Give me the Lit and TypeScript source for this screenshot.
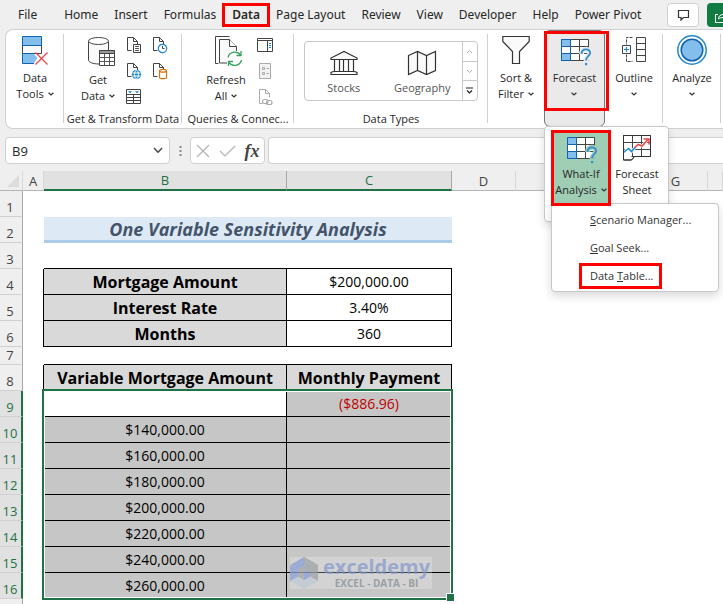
import { LitElement, html, svg, css, nothing } from "lit";
import { customElement } from "lit/decorators.js";
import { classMap } from "lit/directives/class-map.js";

const icon = (w: number, h: number, body: unknown) =>
  html`<svg width=${w} height=${h} viewBox="0 0 ${w} ${h}" fill="none" stroke-linejoin="miter" aria-hidden="true">${body}</svg>`;

const chevron = html`<svg class="chev" width="6" height="4" viewBox="0 0 6 4" fill="none" aria-hidden="true"><path d="M.6 .7L3 3L5.4 .7" stroke="#333" stroke-width="1.2"/></svg>`;

const dataTools = icon(28, 32, svg`
  <path d="M1.500 2.500h19v9h-19z" fill="#83beec" stroke="#0f64b0"/>
  <path d="M1.500 11.500h19v8h-19z" fill="#fafafa" stroke="#444"/>
  <path d="M1.500 19.500h11l4 4.500l-4 5.500h-11z" fill="#83beec"/>
  <path d="M13 29.500H1.500v-10H13M1 11.500h20" stroke="#0f64b0"/>
  <path d="M14.500 18.500l12 12M26.500 18.500l-12 12" stroke="#e8454c" stroke-width="1.300"/>`);

const getData = icon(34, 32, svg`<g transform="translate(6 2)">
  <path d="M1.500 6v18c0 2.200 4.500 4 10.500 4s9.500-1.800 9.500-4V6" fill="#fafafa" stroke="#444"/>
  <ellipse cx="11.500" cy="5" rx="10" ry="3.500" fill="#fff" stroke="#444"/>
  <path d="M12.500 14.500h15v15h-15z" fill="#fff" stroke="#444"/>
  <path d="M12.500 14.500h15v3h-15z" fill="#999" stroke="#444"/>
  <path d="M12.500 21.500h15M12.500 25.500h15M17.500 18v11.500M22.500 18v11.500" stroke="#555"/></g>`);

const refreshAll = icon(34, 32, svg`<g transform="translate(5 0)">
  <path d="M4.500 29.500h-3v-27h14" stroke="#444"/>
  <path d="M5.500 5.500h10l7 7v16.500h-17z" fill="#fafafa" stroke="#444"/>
  <path d="M15.500 5.500v7h7" fill="#fff" stroke="#444"/>
  <path d="M13 17h15v15h-15z" fill="#fff"/>
  <path d="M14 23.500a7 7 0 0 1 12.500-2.500M27.500 26a7 7 0 0 1-12.500 2.500" stroke="#33a05b" stroke-width="1.300"/>
  <path d="M27 17v4.500h-4.500M14.500 32v-4.500h4.500" stroke="#33a05b" stroke-width="1.300"/></g>`);

const page = svg`<path d="M5.500 14.500h-4v-13h6l4 4v3M7.500 1.500v4h4" stroke="#444"/>`;

const fromText = icon(16, 18, svg`${page}<path d="M7.500 8.500h7v8h-7z" fill="#fff" stroke="#444"/><path d="M9 10.500h4M9 12.500h4M9 14.500h4" stroke="#555"/>`);
const recent = icon(16, 18, svg`${page}<circle cx="10.500" cy="12.500" r="4.200" fill="#fff" stroke="#1e88cf" stroke-width="1.200"/><path d="M10.500 10v2.500h2" stroke="#444"/>`);
const fromWeb = icon(16, 18, svg`${page}<circle cx="10.500" cy="12.500" r="4.700" fill="#1e88cf"/><path d="M6.500 11h8M6.500 14h8" stroke="#fff"/><ellipse cx="10.500" cy="12.500" rx="2" ry="4.200" stroke="#fff" stroke-width=".9"/>`);
const connections = icon(16, 18, svg`${page}<path d="M7.500 9v6.500c0 1 1.600 1.200 3.500 1.200s3.500-.3 3.500-1.200V9" fill="#fff" stroke="#d9730d" stroke-width="1.200"/><ellipse cx="11" cy="8.700" rx="3.500" ry="1.400" fill="#fff" stroke="#d9730d" stroke-width="1.200"/>`);
const fromTable = icon(16, 18, svg`
  <path d="M.5 1.500h14v14h-14z" fill="#fff" stroke="#444"/>
  <path d="M.5 6.500h14M.5 9.500h14M.5 12.500h14M7.500 6v9.500" stroke="#444"/>
  <path d="M2.500 3.500l1.500 1.500l1.500-1.500zM9.500 3.500l1.500 1.500l1.500-1.500z" fill="#1e88cf" stroke="#1e88cf" stroke-width=".6"/>`);

const pane = icon(16, 18, svg`<path d="M.5 2.500h15v13h-15z" fill="#fff" stroke="#444"/><path d="M.5 4.500h15M10.500 4.500v11" stroke="#444"/><path d="M12 7.500h2M12 9.500h2M12 11.500h2" stroke="#1e88cf"/>`);
const props = icon(16, 18, svg`<path d="M2.500 1.500h11v15h-11z" fill="#f2f2f2" stroke="#aaa"/><path d="M5.500 5.500h2v2h-2zM5.500 10.500h2v2h-2zM9.500 6.500h2.500M9.500 11.500h2.500" stroke="#aaa"/>`);
const links = icon(16, 18, svg`<path d="M5.500 15.500h-3v-14h6l4 4v4M8.500 1.500v4h4" stroke="#aaa"/><rect x="5.500" y="11.500" width="5.500" height="4" rx="2" stroke="#aaa" stroke-width="1.200"/><rect x="9.500" y="12.500" width="5.500" height="4" rx="2" stroke="#aaa" stroke-width="1.200"/>`);

const stocks = icon(28, 26, svg`
  <path d="M1 9.500V8L14 1.500L27 8v1.500z" fill="#fafafa" stroke="#333" stroke-width="1.200"/>
  <path d="M1 24.500h26v-2l-2.500-1h-21l-2.500 1z" fill="#fff" stroke="#333" stroke-width="1.200"/>
  <path d="M4.500 10v11M9.500 10v11M13.500 10v11M18.500 10v11M23.500 10v11" stroke="#333" stroke-width="1.200"/>`);
const geography = icon(30, 26, svg`<path d="M1.500 5.500l9-4l9 4l9-4v19l-9 4l-9-4l-9 4zM10.500 1.500v19M19.500 5.500v19" fill="#fafafa" stroke="#333" stroke-width="1.200"/>`);

const sortFilter = icon(28, 32, svg`<path d="M.8 2.500h26.400v5L17.500 17.500v12h-7v-12L.8 7.500z" fill="#fafafa" stroke="#333" stroke-width="1.200"/>`);

const whatIf = icon(32, 32, svg`
  <path d="M2.500 5.500h27v21h-27z" fill="#fff" stroke="#444"/>
  <path d="M11.500 12.500h18M11.500 19.500h18M20.500 5.500v21" stroke="#444"/>
  <path d="M2.500 5.500h9v7h-9zM2.500 19.500h9v7h-9z" fill="#83beec" stroke="#0f64b0"/>
  <path d="M2.500 12.500h9v7h-9z" fill="#fff" stroke="#0f64b0"/>
  <path class="halo" d="M22.500 20c0-3 2-4.700 4.500-4.700s4.500 1.800 4 4.200c-.5 2.700-4 3-4 8" stroke-width="5"/>
  <path d="M22.500 20c0-3 2-4.700 4.500-4.700s4.500 1.800 4 4.200c-.5 2.700-4 3-4 7" stroke="#2f8fd0" stroke-width="1.800"/>
  <path d="M26 29h2.200v2.200h-2.200z" fill="#2f8fd0"/>`);

const forecastSheet = icon(30, 28, svg`
  <path d="M1.500 1.500h27v21h-16l-3 3.500h-8z" fill="#fff" stroke="#333"/>
  <path d="M1.500 8.500h27M1.500 15.500h27M10.500 1.500v21M19.500 1.500v21" stroke="#444"/>
  <path d="M1.500 18.500l5-4l3 3l4-4.500" stroke="#fff" stroke-width="3"/>
  <path d="M13 13.500l3-3l4 1.500l6.500-7" stroke="#fff" stroke-width="3"/>
  <path d="M1.500 18.500l5-4l3 3l4-4.500" stroke="#1e88cf" stroke-width="1.600"/>
  <path d="M13 13.500l3-3l4 1.500l6.500-7" stroke="#e8454c" stroke-width="1.600"/>
  <path d="M21.500 5h5.500v5.500" stroke="#e8454c" stroke-width="1.500"/>
  <path d="M1.500 1.500v24.500h8l3-3.500h-3M1.500 1.500h27v21" stroke="#333"/>`);

const outline = icon(28, 32, svg`<g transform="translate(2 0)">
  <path d="M14.500 3.500h9v24h-9zM14.500 9.500h9M14.500 15.500h9M14.500 21.500h9" fill="#fafafa" stroke="#444"/>
  <path d="M10.500 3.500h-6v7M4.500 20.500v7h6" stroke="#444" stroke-dasharray="3 1"/>
  <path d="M.5 11.500h8v8h-8z" fill="#fff" stroke="#444"/>
  <path d="M2 15.500h5M4.500 13v5" stroke="#1e88cf" stroke-width="1.200"/></g>`);
const analyze = icon(32, 32, svg`<circle cx="16" cy="16" r="14.200" fill="#fff" stroke="#1e88cf" stroke-width="1.500"/><circle cx="16" cy="16" r="10.800" fill="#83beec" stroke="#0f64b0" stroke-width="1.500"/>`);

const TABS = ["File", "Home", "Insert", "Formulas", "Data", "Page Layout", "Review", "View", "Developer", "Help", "Power Pivot"];
const COLS = ["A", "B", "C", "D", "E", "F", "G", "H"];
const VARIABLE = ["$140,000.00", "$160,000.00", "$180,000.00", "$200,000.00", "$220,000.00", "$240,000.00", "$260,000.00"];
const LOAN = [["Mortgage Amount", "$200,000.00"], ["Interest Rate", "3.40%"], ["Months", "360"]];

@customElement("app-root")
export class AppRoot extends LitElement {
  static styles = css`
    :host {
      --a: 21px; --b: 243px; --c: 165px; --num: 23px;
      --ui: "Open Sans", "Noto Sans", sans-serif;
      display: flex; flex-direction: column; height: 100vh; overflow: hidden;
      background: #efefef; color: #262626; font: 12px/16px var(--ui);
    }
    * { box-sizing: border-box; }
    button { font: inherit; color: inherit; background: none; border: 0; padding: 0; margin: 0; }
    input { font: inherit; color: inherit; border: 0; padding: 0; min-width: 0; outline: none; background: none; }
    svg { display: block; flex: none; }
    .mark { position: relative; }
    .mark::after { content: ""; position: absolute; z-index: 3; inset: 0; border: 3px solid #fd0000; pointer-events: none; }

    .tabs { display: flex; align-items: center; height: 29px; padding-left: 10px; flex: none; overflow: hidden; font-family: "Noto Sans", sans-serif; }
    .tab { padding: 0 8px; height: 28px; white-space: nowrap; flex: none; }
    .tab.first { margin-right: 11px; }
    .tab.on { font-weight: 600; }
    .tab.mark::after { inset: 2px -2px 2px -2px; }
    .spacer { flex: 1; }
    .note { width: 32px; height: 24px; flex: none; display: grid; place-items: center; background: #fff; border: 1px solid #d0d0d0; border-radius: 4px; margin-right: 8px; }
    .share { width: 16px; height: 24px; flex: none; background: #107c41; border-radius: 4px 0 0 4px; overflow: hidden; padding: 5px 0 0 7px; }

    .ribbon { display: flex; flex: none; height: 100px; margin-left: 5px; background: #fff; border: 1px solid #d0d0d0; border-right: 0; border-radius: 8px 0 0 8px; position: relative; z-index: 5; font-size: 11px; }
    .group { display: flex; flex-direction: column; flex: none; position: relative; padding-top: 4px; }
    .group.line::after { content: ""; position: absolute; right: 0; top: 4px; bottom: 5px; border-right: 1px solid #d0d0d0; }
    .narrow { width: 58px; }
    .sort { width: 56px; }
    .rest { width: 2px; }
    .wide { width: 118px; }
    .mid { width: 112px; }
    .grow { flex: 1 0 194px; }
    .row { display: flex; justify-content: center; flex: 1; }
    .big { display: flex; flex-direction: column; align-items: center; line-height: 16px; gap: 4px; white-space: nowrap; }
    .big .text { display: flex; flex-direction: column; align-items: center; }
    .big .last { display: flex; align-items: center; gap: 4px; min-height: 16px; }
    .capped .big { gap: 6px; }
    .capped .row { padding-left: 8px; }
    .caption { text-align: center; height: 17px; white-space: nowrap; }
    .small { display: grid; grid-template-columns: repeat(2, 26px); align-content: start; gap: 8px 0; margin: 2px 0 0 6px; }
    .small.one { grid-template-columns: 26px; }
    .small svg { margin: 0 auto; }
    .pressed { background: #eaeaea; border: 1px solid #777; border-radius: 6px; width: 61px; height: 97px; padding-top: 3px; }
    .pressed > .mark::after { inset: -3px -5px -5px -1px; }
    .pressed > .mark { height: 72px; }

    .gallery { display: flex; height: 60px; margin: 7px 10px 0 9px; border: 1px solid #c8c8c8; border-radius: 4px; width: 174px; color: #555; }
    .item { flex: 1; display: flex; flex-direction: column; align-items: center; gap: 4px; padding-top: 8px; }
    .steps { width: 15px; display: flex; flex-direction: column; border-left: 1px solid #c8c8c8; }
    .steps button { flex: 1; display: grid; place-items: center; }
    .steps button + button { border-top: 1px solid #c8c8c8; }

    .flyout { position: absolute; left: -1px; top: 95px; width: 125px; height: 96px; background: #fff; border: 1px solid #c8c8c8; border-radius: 4px; box-shadow: 0 4px 10px #00000020; display: flex; padding: 3px 4px 0 7px; }
    .flyout .big { width: 58px; flex: none; height: 74px; gap: 2px; padding-top: 2px; }
    .flyout .big.green { background: #a0ceb5; }
    .halo { stroke: #fff; }
    .pressed > .big .halo { stroke: #eaeaea; }
    .green .halo { stroke: #a0ceb5; }
    .flyout .mark::after { inset: 0 -1px -2px -1px; }
    .flyout .pad { padding-top: 4px; gap: 4px; flex: 1; }
    .menu { position: absolute; left: 6px; top: 76px; width: 168px; background: #fff; border: 1px solid #c8c8c8; border-radius: 4px; box-shadow: 0 4px 10px #00000026; padding: 2px 0 1px; display: flex; flex-direction: column; color: #333; }
    .menu button { height: 28px; text-align: left; padding-left: 38px; white-space: nowrap; }
    .menu .mark::after { inset: 1px 56px 1px 27px; }

    .bar { display: flex; flex: none; height: 42px; padding: 8px 0 7px 5px; align-items: stretch; }
    .box { background: #fff; border: 1px solid #d0d0d0; border-radius: 4px; display: flex; align-items: center; }
    .name { width: 165px; padding: 0 6px; }
    .name input { flex: 1; font-size: 13px; }
    .dots { width: 20px; display: grid; place-items: center; }
    .acts { width: 75px; justify-content: space-around; margin-right: 3px; }
    .fx { font: italic bold 18px/20px "Liberation Serif", serif; color: #444; }
    .formula { flex: 1; border-right: 0; border-radius: 4px 0 0 4px; }
    .formula input { width: 100%; padding: 0 6px; }

    .sheet { flex: 1; overflow: hidden; background: #fff; }
    table { width: 100%; table-layout: fixed; border-collapse: separate; border-spacing: 0; font: 14px/20px var(--ui); color: #000; }
    .cn { width: var(--num); } .ca { width: var(--a); } .cb { width: var(--b); } .cc { width: var(--c); } .cx { width: 64px; }
    th, td { padding: 0; height: 26px; font-weight: normal; text-align: center; white-space: nowrap; }
    thead th { height: 20px; font: 13px/18px var(--ui); background: #efefef; color: #444; border-right: 1px solid #d8d8d8; border-bottom: 1px solid #b4b4b4; }
    thead .sel { background: #e1e1e1; color: #1f7246; border-right-color: #a8a8a8; border-bottom: 2px solid #1f7246; }
    thead .corner svg { margin: 0 3px 0 auto; }
    .num { font: 13px/18px var(--ui); background: #efefef; color: #444; border-right: 1px solid #a8a8a8; border-bottom: 1px solid #d0d0d0; vertical-align: bottom; padding-right: 2px; }
    .short .num, .short td { height: 18px; line-height: 17px; }
    .title { background: #ddeaf6; border-bottom: 3px solid #accbe8; font: italic bold 18px/22px var(--ui); color: #44546a; }
    .top { border-bottom: 1px solid #000; }
    .edge { border-right: 1px solid #000; }
    .cell { border-right: 1px solid #000; border-bottom: 1px solid #000; }
    .label { background: #d9d9d9; font-weight: bold; font-size: 16px; }
    .picked { position: relative; }
    .picked .num { background: #e1e1e1; color: #1f7246; border-right: 2px solid #1f7246; padding-right: 1px; }
    .picked .cell { background: #c6c6c6; }
    .picked .active { background: #fff; }
    .picked .neg { color: #c00000; }
    .frame { position: absolute; z-index: 1; left: calc(var(--num) + var(--a) - 2px); top: -2px; bottom: -1px; width: calc(var(--b) + var(--c) + 3px); border: 2px solid #1f7246; box-shadow: inset 0 0 0 1px #fff; pointer-events: none; }
    .frame::after { content: ""; position: absolute; right: -4px; bottom: -4px; width: 7px; height: 7px; background: #1f7246; border: 1px solid #fff; }
    .host { position: relative; }
    .brand { position: absolute; left: 3px; top: 10px; width: 142px; height: 32px; display: flex; align-items: center; gap: 5px; background: #ffffff50; opacity: .75; text-align: center; color: #8a9199; }
    .brand b { display: block; font: bold 20px/20px var(--ui); color: #8d9fd0; }
    .brand small { display: block; font: bold 10px/12px var(--ui); }
  `;

  private big(ic: unknown, a: string, b: unknown, cls = "") {
    return html`<button class="big ${cls}">${ic}<span class="text"><span>${a}</span><span class="last">${b}</span></span></button>`;
  }

  private ribbon() {
    return html`<div class="ribbon">
      <div class="group narrow line"><div class="row">${this.big(dataTools, "Data", html`Tools ${chevron}`)}</div></div>
      <div class="group wide line capped">
        <div class="row">${this.big(getData, "Get", html`Data ${chevron}`)}
          <div class="small">${[fromText, recent, fromWeb, connections, fromTable].map((i) => html`<button>${i}</button>`)}</div>
        </div>
        <div class="caption">Get &amp; Transform Data</div>
      </div>
      <div class="group mid line capped">
        <div class="row">${this.big(refreshAll, "Refresh", html`All ${chevron}`)}
          <div class="small one">${[pane, props, links].map((i) => html`<button>${i}</button>`)}</div>
        </div>
        <div class="caption">Queries &amp; Connec...</div>
      </div>
      <div class="group grow line">
        <div class="row"><div class="gallery">
          <button class="item">${stocks}Stocks</button>
          <button class="item">${geography}Geography</button>
          <div class="steps">
            <button aria-label="Up">${icon(7, 5, svg`<path d="M1 4L3.500 1.500L6 4" stroke="#aaa"/>`)}</button>
            <button aria-label="Down">${icon(7, 5, svg`<path d="M1 1L3.500 3.500L6 1" stroke="#aaa"/>`)}</button>
            <button aria-label="More">${icon(7, 7, svg`<path d="M0 1h7M1 3.500L3.500 6L6 3.500" stroke="#222" stroke-width="1.200"/>`)}</button>
          </div>
        </div></div>
        <div class="caption">Data Types</div>
      </div>
      <div class="group sort">${this.big(sortFilter, "Sort &", html`Filter ${chevron}`)}</div>
      <div class="group pressed">
        ${this.big(whatIf, "Forecast", chevron, "mark")}
        <div class="flyout">
          ${this.big(whatIf, "What-If", html`Analysis ${chevron}`, "green mark")}
          ${this.big(forecastSheet, "Forecast", "Sheet", "pad")}
          <div class="menu" role="menu">
            <button role="menuitem"><u>S</u>cenario Manager...</button>
            <button role="menuitem"><u>G</u>oal Seek...</button>
            <button role="menuitem" class="mark">Data <u>T</u>able...</button>
          </div>
        </div>
      </div>
      <div class="group narrow line">${this.big(outline, "Outline", chevron)}</div>
      <div class="group narrow line">${this.big(analyze, "Analyze", chevron)}</div>
      <div class="group rest"></div>
    </div>`;
  }

  private blanks(n: number) {
    return Array.from({ length: n }, () => html`<td></td>`);
  }

  private num(n: number) {
    return html`<th class="num" scope="row">${n}</th>`;
  }

  private sheet() {
    return html`<div class="sheet"><table>
      <colgroup><col class="cn"><col class="ca"><col class="cb"><col class="cc"><col class="cx"><col class="cx"><col class="cx"><col class="cx"><col></colgroup>
      <thead><tr>
        <th class="corner">${icon(12, 12, svg`<path d="M12 0v12H0z" fill="#dcdcdc"/>`)}</th>
        ${COLS.map((c) => html`<th scope="col" class=${classMap({ sel: c === "B" || c === "C" })}>${c === "H" ? nothing : c}</th>`)}
      </tr></thead>
      <tbody>
        <tr>${this.num(1)}${this.blanks(8)}</tr>
        <tr>${this.num(2)}<td></td><td class="title" colspan="2">One Variable Sensitivity Analysis</td>${this.blanks(5)}</tr>
        <tr>${this.num(3)}<td></td><td class="top"></td><td class="top"></td>${this.blanks(5)}</tr>
        ${LOAN.map(([k, v], i) => html`<tr>${this.num(4 + i)}<td class="edge"></td><td class="cell label">${k}</td><td class="cell">${v}</td>${this.blanks(5)}</tr>`)}
        <tr class="short">${this.num(7)}<td></td><td class="top"></td><td class="top"></td>${this.blanks(5)}</tr>
        <tr>${this.num(8)}<td class="edge"></td><td class="cell label">Variable Mortgage Amount</td><td class="cell label">Monthly Payment</td>${this.blanks(5)}</tr>
      </tbody>
      <tbody class="picked">
        <tr>${this.num(9)}<td></td><td class="cell active"></td><td class="cell neg">($886.96)</td><td><div class="frame"></div></td>${this.blanks(4)}</tr>
        ${VARIABLE.map((v, i) => html`<tr>${this.num(10 + i)}<td></td><td class="cell">${v}</td><td class="cell ${i === 5 ? "host" : ""}">${i === 5 ? this.brand() : nothing}</td>${this.blanks(5)}</tr>`)}
      </tbody>
      <tbody><tr><th class="num" scope="row"></th>${this.blanks(8)}</tr></tbody>
    </table></div>`;
  }

  private brand() {
    return html`<div class="brand">
      ${icon(28, 32, svg`
        <path d="M14 0L28 8L14 16L0 8z" fill="#8ea3d8"/><path d="M0 8l8 4.500v9L0 24z" fill="#8ea3d8"/>
        <path d="M14 0l14 8v16l-8-4.500v-7L14 9z" fill="#a3a8ae"/>
        <path d="M0 24l8-4.500l6 3.500l6-3.500l8 4.500l-14 8z" fill="#c2ced9"/>
        <path d="M14 9l6 3.500v7L14 23l-6-3.500v-7z" fill="#a5aab0"/><path d="M14 16l6-3.500v7L14 23z" fill="#8ea3d8"/>`)}
      <span><b>exceldemy</b><small>EXCEL - DATA - BI</small></span>
    </div>`;
  }

  render() {
    return html`
      <nav class="tabs">
        ${TABS.map((t, i) => html`<button class=${classMap({ tab: true, first: i === 0, on: t === "Data", mark: t === "Data" })}>${t}</button>`)}
        <span class="spacer"></span>
        <button class="note" aria-label="Comments">${icon(13, 12, svg`<path d="M1.500 1.500h10v7h-5l-2.500 2.500v-2.500h-2.500z" stroke="#333" stroke-width="1.200"/>`)}</button>
        <button class="share" aria-label="Share">${icon(14, 14, svg`<path d="M4 4.500H1.500v8h10v-3M4.500 9c0-3 2-4.500 5-4.500V2l4 4l-4 4V7.500c-2 0-4 .5-5 1.500z" stroke="#fff"/>`)}</button>
      </nav>
      ${this.ribbon()}
      <div class="bar">
        <div class="box name"><input aria-label="Name Box" value="B9"><button aria-label="Open name list">${icon(10, 7, svg`<path d="M1 1l4 4.200L9 1" stroke="#444" stroke-width="1.400"/>`)}</button></div>
        <div class="dots">${icon(3, 12, svg`<path d="M.5 1h2v2h-2zM.5 5h2v2h-2zM.5 9h2v2h-2z" fill="#888"/>`)}</div>
        <div class="box acts">
          <button aria-label="Cancel">${icon(14, 14, svg`<path d="M1 1l12 12M13 1L1 13" stroke="#b4b4b4" stroke-width="1.200"/>`)}</button>
          <button aria-label="Enter">${icon(17, 12, svg`<path d="M1 6l5 5L16 1" stroke="#b4b4b4" stroke-width="1.200"/>`)}</button>
          <button class="fx" aria-label="Insert function">fx</button>
        </div>
        <div class="box formula"><input aria-label="Formula"></div>
      </div>
      ${this.sheet()}`;
  }
}
